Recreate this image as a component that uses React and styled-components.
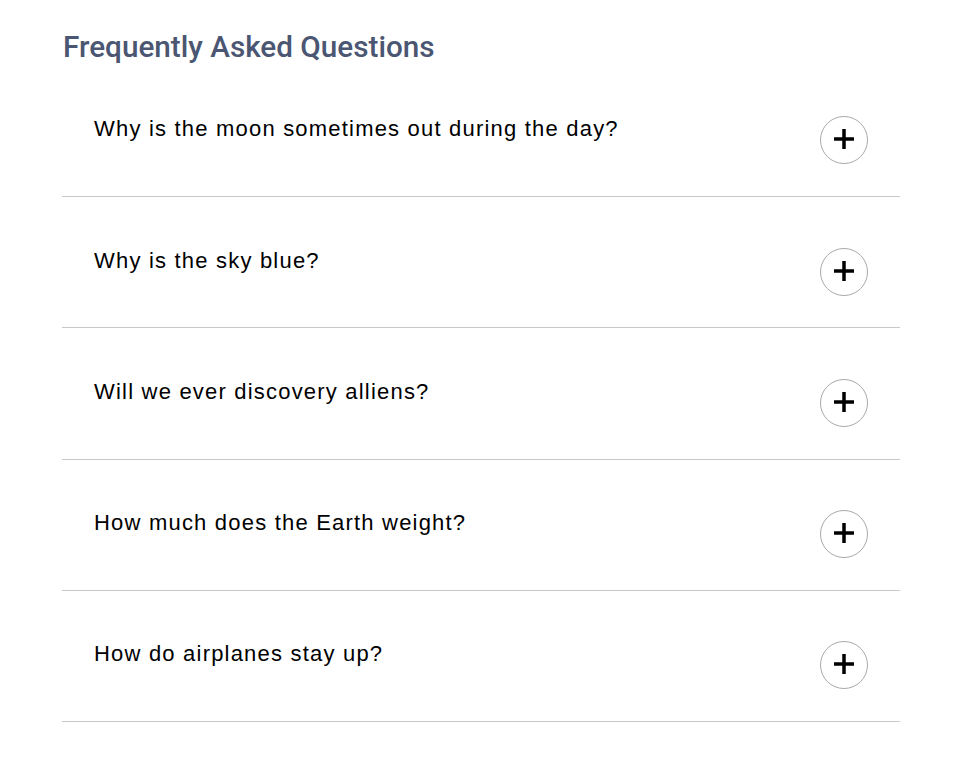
import React from 'react';
import styled, { createGlobalStyle } from 'styled-components';

const questions = [
  'Why is the moon sometimes out during the day?',
  'Why is the sky blue?',
  'Will we ever discovery alliens?',
  'How much does the Earth weight?',
  'How do airplanes stay up?',
];

function PlusIcon() {
  return (
    <svg width="20" height="20" viewBox="0 0 20 20">
      <rect x="8.25" y="0" width="3.5" height="20" fill="#000" />
      <rect x="0" y="8.25" width="20" height="3.5" fill="#000" />
    </svg>
  );
}

function App() {
  const [open, setOpen] = React.useState(null);

  return (
    <>
      <GlobalStyle />
      <Page>
        <Title>Frequently Asked Questions</Title>
        <List>
          {questions.map((q, i) => (
            <Item key={q}>
              <Question>{q}</Question>
              <ToggleButton
                type="button"
                aria-label="toggle answer"
                onClick={() => setOpen(open === i ? null : i)}
              >
                <PlusIcon />
              </ToggleButton>
            </Item>
          ))}
        </List>
      </Page>
    </>
  );
}

const GlobalStyle = createGlobalStyle`
  body {
    margin: 0;
    background: #fff;
    font-family: "Liberation Sans", Arial, sans-serif;
  }
`;

const Page = styled.div`
  padding: 29px 55px 40px 62px;
`;

const Title = styled.h2`
  margin: 0 0 0 1px;
  font-family: Roboto, "Liberation Sans", sans-serif;
  font-weight: 500;
  font-size: 29.7px;
  line-height: 36.75px;
  color: #4b5672;
`;

const List = styled.div`
  display: flex;
  flex-direction: column;
`;

const Item = styled.div`
  display: flex;
  justify-content: space-between;
  align-items: flex-start;
  padding: 50.5px 32px 31.75px;
  border-bottom: 1px solid #c8c8c8;
`;

const Question = styled.h3`
  margin: 0;
  font-size: 22px;
  font-weight: 400;
  line-height: 25px;
  letter-spacing: 1.2px;
  color: #000;
`;

const ToggleButton = styled.button`
  width: 48px;
  height: 48px;
  padding: 0 0 2px;
  border: 1px solid #a9a9a9;
  border-radius: 50%;
  background: #fff;
  display: flex;
  align-items: center;
  justify-content: center;
  cursor: pointer;
  flex-shrink: 0;
`;

export default App;
